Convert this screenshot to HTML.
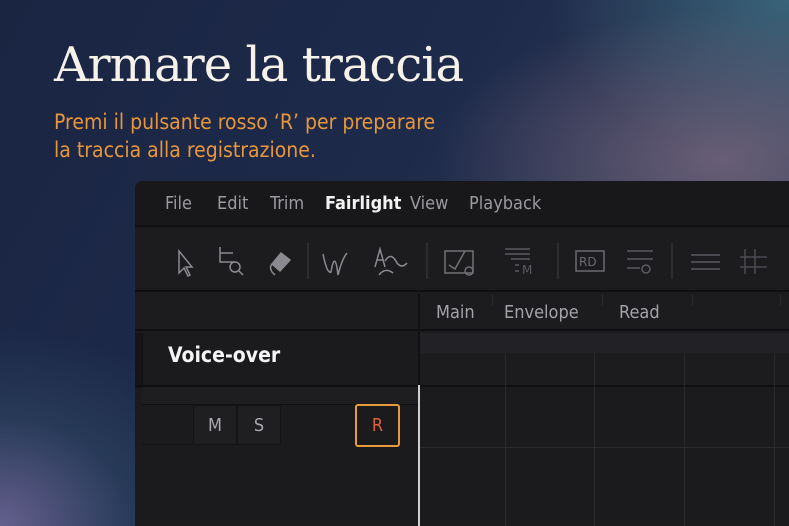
<!DOCTYPE html>
<html><head><meta charset="utf-8"><style>
*{margin:0;padding:0;box-sizing:border-box}
html,body{width:789px;height:526px;overflow:hidden}
body{position:relative;font-family:"DejaVu Sans","Liberation Sans",sans-serif;
background:
radial-gradient(ellipse 240px 200px at 0px 526px, rgba(120,110,160,0.8), rgba(60,90,120,0.35) 55%, transparent 100%),
radial-gradient(ellipse 380px 200px at 720px 160px, rgba(130,110,135,0.7), transparent 75%),
radial-gradient(ellipse 300px 200px at 789px 0px, rgba(60,110,130,0.8), transparent 80%),
linear-gradient(120deg,#1a2542 0%,#1d2a4a 45%,#2a3550 70%,#3a4a5e 100%);}
.t{position:absolute;left:54px;top:37px;font-family:"DejaVu Serif","Liberation Serif",serif;font-size:48px;color:#f6f2ea;letter-spacing:-1px}
.s{position:absolute;left:54px;top:108px;font-size:21px;line-height:28px;color:#e8963c;font-family:"DejaVu Sans Condensed","DejaVu Sans",sans-serif;font-stretch:condensed}
.p{position:absolute;left:135px;top:181px;width:654px;height:345px;background:#1b1b1e;border-radius:8px 0 0 0;overflow:hidden}
.menu{position:absolute;top:0;left:0;right:0;height:46px;background:#18181a;border-bottom:2px solid #101012}
.menu span{position:absolute;top:12px;font-size:18px;color:#9a9aa0;font-family:"DejaVu Sans Condensed","DejaVu Sans",sans-serif;font-stretch:condensed}
.tb{position:absolute;top:48px;left:0;right:0;height:63px;background:#1c1c1f;border-bottom:2px solid #0f0f11}
.hdr{position:absolute;top:113px;left:0;right:0;height:37px;background:#1c1c1f;border-bottom:2px solid #0f0f11}
.hdr span{position:absolute;top:8px;font-size:18px;color:#a2a2a8;font-family:"DejaVu Sans Condensed","DejaVu Sans",sans-serif;font-stretch:condensed}
.l{position:absolute;background:#2a2a2e}
</style></head><body>
<div class="t">Armare la traccia</div>
<div class="s">Premi il pulsante rosso ‘R’ per preparare<br>la traccia alla registrazione.</div>
<div class="p">
 <div class="menu">
  <span style="left:30px">File</span><span style="left:82px">Edit</span><span style="left:135px">Trim</span>
  <span style="left:190px;color:#f2f2f2;font-weight:bold">Fairlight</span><span style="left:275px">View</span><span style="left:334px">Playback</span>
 </div>
 <div class="tb">
 <svg width="654" height="63" viewBox="0 0 654 63" fill="none" stroke="#8a8a90" stroke-width="1.5">
  <path d="M44 22 L44 44 L49 39 L53 47 L55 46 L51 38 L57 38 Z"/>
  <path d="M85 18 V33 H100 M85 24 H98"/><circle cx="100" cy="38" r="5"/><path d="M104 42 L108 46"/>
  <path d="M137 35 L146 24 L155 31 L145 42 Z" fill="#8a8a90"/><path d="M137 35 Q133 40 140 46"/>
  <line x1="173" y1="14" x2="173" y2="50" stroke="#333"/>
  <path d="M188 25 Q192 45 196 43 Q200 20 203 46 Q207 30 212 24"/>
  <path d="M240 38 L245 20 L250 38 M242 31 H248 M250 32 Q256 22 262 34 Q267 40 272 34 M244 46 Q250 38 258 44"/>
  <line x1="292" y1="14" x2="292" y2="50" stroke="#333"/>
  <rect x="310" y="22" width="28" height="22" stroke="#707076"/><path d="M314 36 L320 40 L330 22" stroke="#707076"/><circle cx="334" cy="42" r="4" stroke="#707076"/>
  <path d="M370 20 H395 M370 25 H395 M376 30 H395 M380 36 H384 M380 42 H384" stroke="#5a5a60"/><text x="387" y="45" font-size="12" fill="#5a5a60" stroke="none" font-family="DejaVu Sans">M</text>
  <line x1="423" y1="14" x2="423" y2="50" stroke="#333"/>
  <rect x="441" y="22" width="28" height="20" stroke="#6a6a70"/><text x="444" y="37" font-size="12" fill="#6a6a70" stroke="none" font-family="DejaVu Sans">RD</text>
  <path d="M492 22 H518 M492 30 H518 M492 39 H505" stroke="#5a5a60"/><circle cx="511" cy="40" r="4" stroke="#5a5a60"/>
  <line x1="537" y1="14" x2="537" y2="50" stroke="#333"/>
  <path d="M556 26 H585 M556 33 H585 M556 40 H585" stroke="#5a5a60"/>
  <path d="M610 20 V45 M620 20 V45 M605 28 H632 M605 38 H632" stroke="#4a4a50"/>
 </svg>
 </div>
 <div class="hdr">
  <div class="l" style="left:283px;top:0;width:2px;height:37px;background:#111"></div>
  <span style="left:301px">Main</span><span style="left:369px">Envelope</span><span style="left:484px">Read</span>
  <div class="l" style="left:357px;top:0;width:1px;height:12px"></div>
  <div class="l" style="left:467px;top:0;width:1px;height:12px"></div>
  <div class="l" style="left:557px;top:0;width:1px;height:12px"></div>
  <div class="l" style="left:645px;top:0;width:1px;height:12px"></div>
 </div>
 <div style="position:absolute;top:152px;left:0;width:7px;height:55px;background:#151517"></div>
 <div style="position:absolute;top:152px;left:7px;width:276px;height:52px;background:#1b1b1e;border-left:1px solid #111"></div>
 <div style="position:absolute;top:162px;left:33px;font-size:21px;font-weight:bold;color:#f4f4f4;font-family:'DejaVu Sans Condensed','DejaVu Sans',sans-serif;font-stretch:condensed">Voice-over</div>
 <div style="position:absolute;top:150px;left:283px;width:2px;height:200px;background:#111"></div>
 <div style="position:absolute;top:152px;left:285px;right:0;height:20px;background:#222226"></div>
 <div style="position:absolute;top:172px;left:285px;right:0;height:32px;background:#1c1c1f"></div>
 <div style="position:absolute;top:204px;left:0;right:0;height:2px;background:#0f0f11"></div>
 <div style="position:absolute;top:206px;left:7px;width:276px;height:18px;background:#1e1e21;border-bottom:1px solid #111"></div>
 <div style="position:absolute;top:224px;left:7px;width:50px;height:40px;border-bottom:1px solid #111"></div>
 <div style="position:absolute;top:224px;left:58px;width:44px;height:40px;background:#1f1f22;border:1px solid #141416;color:#a8a8ae;font-size:18px;text-align:center;line-height:40px;font-family:'DejaVu Sans Condensed',sans-serif">M</div>
 <div style="position:absolute;top:224px;left:102px;width:44px;height:40px;background:#1f1f22;border:1px solid #141416;color:#a8a8ae;font-size:18px;text-align:center;line-height:40px;font-family:'DejaVu Sans Condensed',sans-serif">S</div>
 <div style="position:absolute;top:223px;left:220px;width:45px;height:43px;border:2px solid #e89a3a;border-radius:3px;color:#e0603a;font-size:18px;text-align:center;line-height:39px;font-family:'DejaVu Sans Condensed',sans-serif">R</div>
 <div style="position:absolute;top:204px;left:283px;width:2px;height:141px;background:#cfcfd2"></div>
 <div class="l" style="left:370px;top:172px;width:1px;height:173px"></div>
 <div class="l" style="left:459px;top:172px;width:1px;height:173px"></div>
 <div class="l" style="left:549px;top:172px;width:1px;height:173px"></div>
 <div class="l" style="left:639px;top:172px;width:1px;height:173px"></div>
 <div class="l" style="left:285px;top:266px;right:0;height:1px"></div>
</div>
</body></html>
